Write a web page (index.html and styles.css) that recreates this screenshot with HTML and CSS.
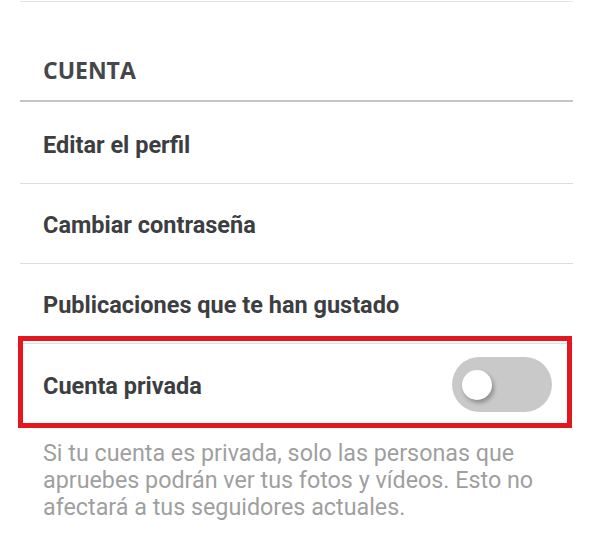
FILE: index.html
```html
<!DOCTYPE html>
<html lang="es">
	<head>
		<meta charset="UTF-8" />
		<meta name="viewport" content="width=device-width, initial-scale=1.0" />
		<title>Cuenta</title>
		<link rel="stylesheet" href="styles.css">
	</head>
	<body>
		<div class="settings">
			<div class="section">
				<h2 class="sectionTitle">CUENTA</h2>
				<div class="row">Editar el perfil</div>
				<div class="row">Cambiar contraseña</div>
				<div class="row">Publicaciones que te han gustado</div>
				<div class="row row-toggle marked">
					<span>Cuenta privada</span>
					<label class="switch">
						<input type="checkbox" />
						<span class="knob"></span>
					</label>
				</div>
			</div>
			<p class="hint">Si tu cuenta es privada, solo las personas que apruebes podrán ver tus fotos y vídeos. Esto no afectará a tus seguidores actuales.</p>
		</div>
	</body>
</html>
```

FILE: styles.css
```css
* {
	padding: 0;
	margin: 0;
	box-sizing: border-box;
}
body {
	background: #fff;
	font-family: Roboto, "Noto Sans", sans-serif;
}
.settings {
	padding: 0 27px 0 20px;
}
.section {
	margin-top: 1px;
	border-top: 1px solid #e3e3e3;
}
.sectionTitle {
	height: 100px;
	margin-bottom: 2px;
	padding: 52px 0 0 23px;
	font-family: "Open Sans", sans-serif;
	font-weight: 700;
	font-size: 23px;
	line-height: 32px;
	color: #46474a;
	border-bottom: 2px solid #c4c4c4;
}
.row {
	height: 80px;
	display: flex;
	align-items: center;
	padding: 3px 0 0 23px;
	font-size: 23.5px;
	font-weight: 700;
	color: #3d3e42;
	border-bottom: 1px solid #dedede;
}
.row-toggle {
	justify-content: space-between;
	padding: 0 21px 0 23px;
	border-bottom: none;
}
.row-toggle span {
	padding-top: 3px;
}
.marked {
	position: relative;
}
/* red frame drawn over the private-account row */
.marked::after {
	content: "";
	position: absolute;
	top: -8px;
	left: -2px;
	right: 1px;
	bottom: -4px;
	border: 5px solid #e4161f;
	pointer-events: none;
}
.switch {
	position: relative;
	display: block;
	width: 100px;
	height: 55px;
	border-radius: 28px;
	background: #c9c9c9;
}
.switch input {
	display: none;
}
.knob {
	position: absolute;
	left: 10px;
	top: 13px;
	width: 30px;
	height: 30px;
	border-radius: 50%;
	background: #fff;
	box-shadow: 2px 3px 4px rgba(0, 0, 0, 0.3);
}
.hint {
	margin-top: 16px;
	padding: 0 20px 0 23px;
	font-size: 23.3px;
	line-height: 27px;
	color: #9f9f9f;
}
```
